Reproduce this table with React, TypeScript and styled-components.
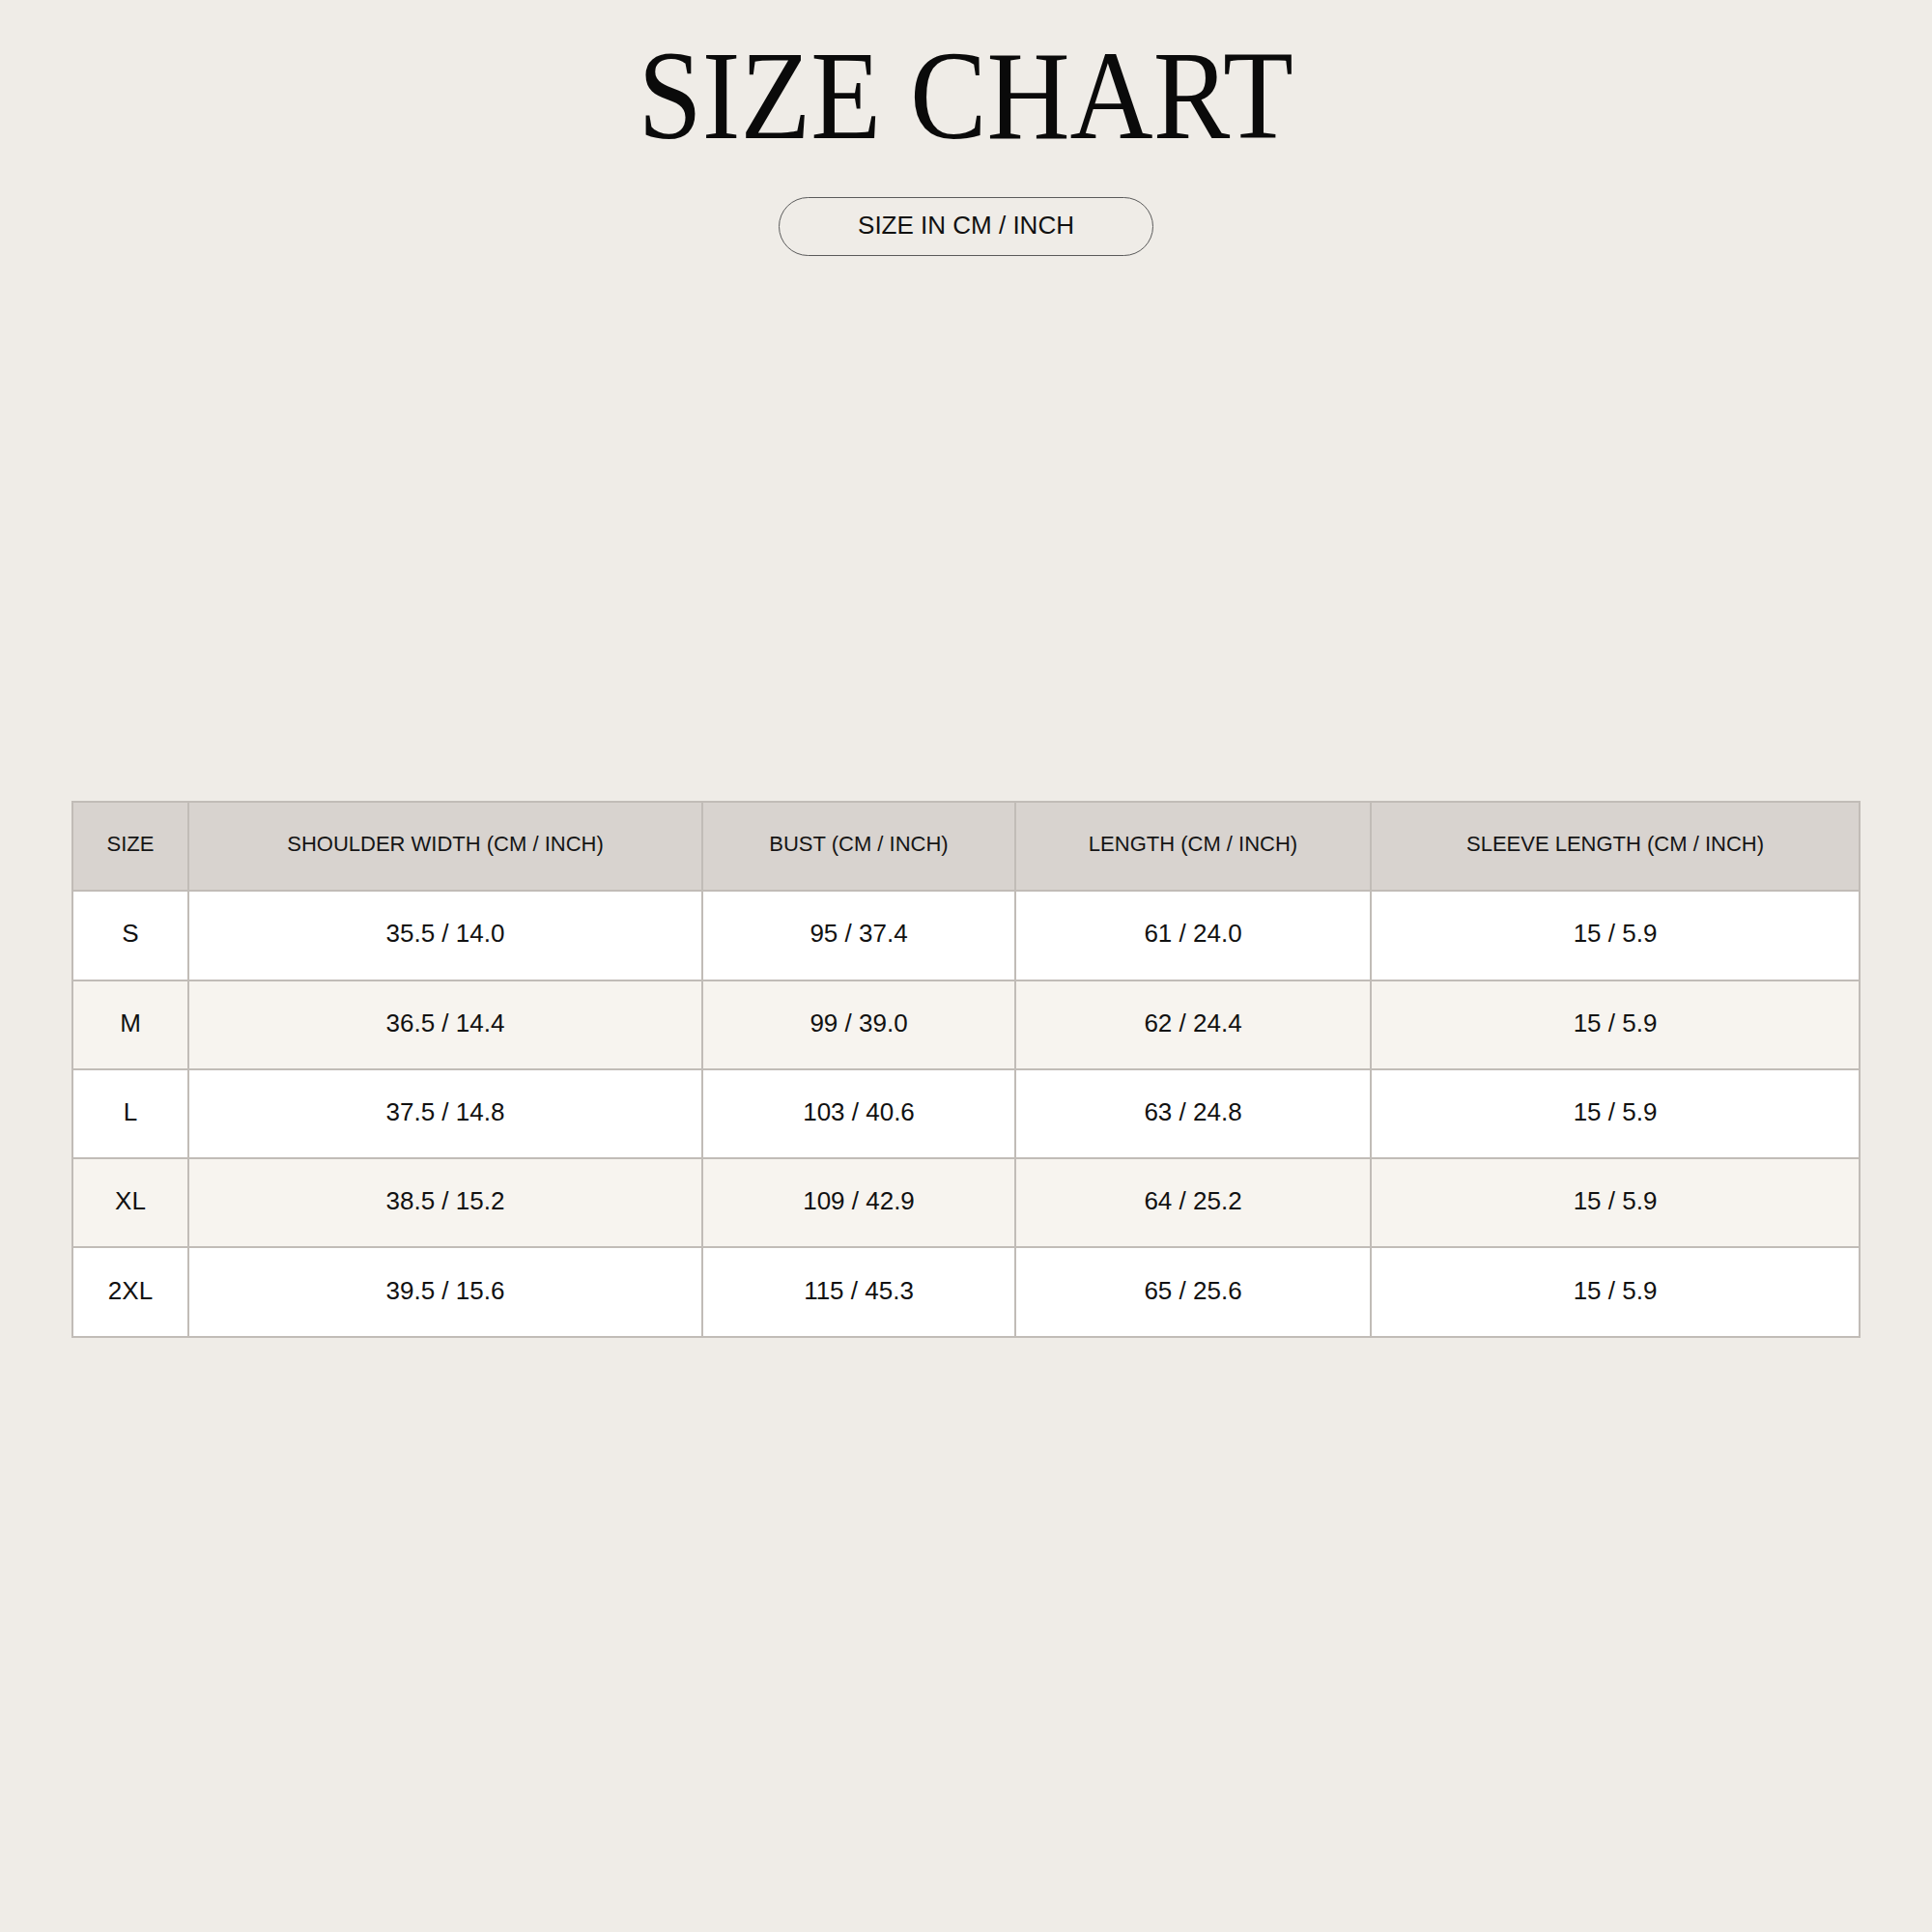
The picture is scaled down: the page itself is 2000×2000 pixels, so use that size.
import React from "react";
import styled, { createGlobalStyle } from "styled-components";

const GlobalStyle = createGlobalStyle`
  html, body {
    margin: 0;
    padding: 0;
    background: #efece7;
  }
  * { box-sizing: border-box; }
`;

const Page = styled.main`
  width: 2000px;
  height: 2000px;
  background: #efece7;
  display: flex;
  flex-direction: column;
  align-items: center;
  font-family: "Liberation Sans", Arial, sans-serif;
  color: #111;
`;

const Title = styled.h1`
  margin: 33px 0 0;
  font-family: "Liberation Serif", "Times New Roman", serif;
  font-weight: 400;
  font-size: 131px;
  line-height: 131px;
  height: 131px;
  color: #0a0a0a;
  white-space: nowrap;
  display: inline-block;
  transform: scaleX(0.91);
  transform-origin: center;
`;

const Pill = styled.div`
  margin-top: 40px;
  width: 388px;
  height: 61px;
  border: 1.5px solid #5a5a5a;
  border-radius: 31px;
  display: flex;
  align-items: center;
  justify-content: center;
  font-size: 26px;
  color: #111;
  padding-bottom: 2px;
`;

const Table = styled.div`
  margin-top: 564px;
  display: grid;
  grid-template-columns: 118px 530px 322px 366px 504px;
  grid-auto-rows: 90.3px;
  gap: 2px;
  padding: 2px;
  background: #c1bcb7;
`;

const HeadCell = styled.div`
  background: #d8d3cf;
  display: flex;
  align-items: center;
  justify-content: center;
  font-size: 22px;
  color: #151515;
  padding-bottom: 4px;
`;

const Cell = styled.div<{ $alt: boolean }>`
  background: ${(p) => (p.$alt ? "#f7f4ef" : "#ffffff")};
  display: flex;
  align-items: center;
  justify-content: center;
  font-size: 26px;
  color: #111;
  padding-bottom: 3px;
`;

const headers = [
  "SIZE",
  "SHOULDER WIDTH (CM / INCH)",
  "BUST (CM / INCH)",
  "LENGTH (CM / INCH)",
  "SLEEVE LENGTH (CM / INCH)",
];

const rows = [
  ["S", "35.5 / 14.0", "95 / 37.4", "61 / 24.0", "15 / 5.9"],
  ["M", "36.5 / 14.4", "99 / 39.0", "62 / 24.4", "15 / 5.9"],
  ["L", "37.5 / 14.8", "103 / 40.6", "63 / 24.8", "15 / 5.9"],
  ["XL", "38.5 / 15.2", "109 / 42.9", "64 / 25.2", "15 / 5.9"],
  ["2XL", "39.5 / 15.6", "115 / 45.3", "65 / 25.6", "15 / 5.9"],
];

export default function App() {
  return (
    <>
      <GlobalStyle />
      <Page>
        <Title>SIZE CHART</Title>
        <Pill>SIZE IN CM / INCH</Pill>
        <Table>
          {headers.map((h) => (
            <HeadCell key={h}>{h}</HeadCell>
          ))}
          {rows.map((r, i) =>
            r.map((c, j) => (
              <Cell key={`${i}-${j}`} $alt={i % 2 === 1}>
                {c}
              </Cell>
            ))
          )}
        </Table>
      </Page>
    </>
  );
}
